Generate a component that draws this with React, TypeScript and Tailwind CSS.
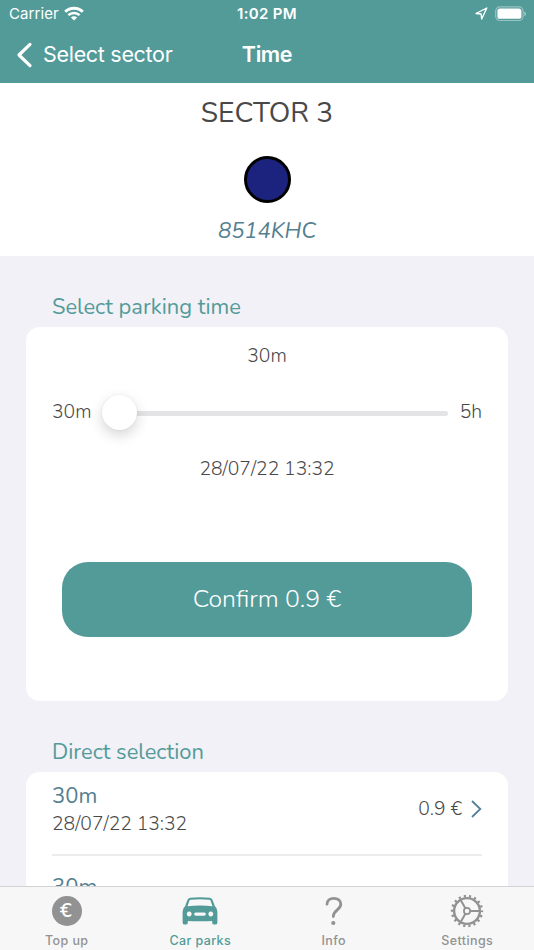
import React from "react";

const body = "font-['Nunito','Lato','Noto_Sans',sans-serif]";

function Wifi() {
  return (
    <svg width="20" height="15" viewBox="0 0 20 15" fill="none" stroke="white" strokeWidth="2.9">
      <path d="M1.2 5.8 A12.5 12.5 0 0 1 18.8 5.8" />
      <path d="M4.4 9.2 A8 8 0 0 1 15.6 9.2" strokeWidth="2.5" />
      <path d="M10 14.6 L6.9 11.5 A4.4 4.4 0 0 1 13.1 11.5 Z" fill="white" stroke="none" />
    </svg>
  );
}

function Battery() {
  return (
    <svg width="32" height="16" viewBox="0 0 32 16">
      <rect x="0.7" y="0.9" width="27.4" height="13.6" rx="4.2" fill="none" stroke="white" strokeOpacity="0.4" strokeWidth="1.2" />
      <rect x="2.4" y="2.6" width="24" height="10.2" rx="2.6" fill="white" />
      <path d="M29.4 5.4 Q31 6 31 7.7 Q31 9.4 29.4 10 Z" fill="white" fillOpacity="0.5" />
    </svg>
  );
}

function Car() {
  return (
    <svg width="36" height="28" viewBox="0 0 36 28">
      <path fillRule="evenodd" fill="#529b99" d="M8.2 0.8 Q18 -0.4 27.8 0.8 Q29.8 1.1 30.6 3 L32.9 9.3 Q35.4 11 35.4 14.5 V25.4 Q35.4 27.6 33.2 27.6 H32.2 Q30.2 27.6 30.2 25.4 V23.9 Q18 24.8 5.8 23.9 V25.4 Q5.8 27.6 3.8 27.6 H2.8 Q0.6 27.6 0.6 25.4 V14.5 Q0.6 11 3.1 9.3 L5.4 3 Q6.2 1.1 8.2 0.8 Z M8.8 2.7 Q7.7 2.8 7.3 3.9 L5.5 9.2 Q18 8 30.5 9.2 L28.7 3.9 Q28.3 2.8 27.2 2.7 Q18 1.6 8.8 2.7 Z M7.2 14.6 a2.4 2.4 0 1 0 0.01 0 Z M28.8 14.6 a2.4 2.4 0 1 0 0.01 0 Z M13.8 15.4 a1.7 1.7 0 0 0 0 3.4 h8.4 a1.7 1.7 0 0 0 0 -3.4 Z" />
    </svg>
  );
}

function Gear() {
  return (
    <svg width="34" height="34" viewBox="0 0 34 34" fill="none" stroke="#929292">
      <circle cx="17" cy="17" r="12.9" strokeWidth="2.4" />
      <circle cx="17" cy="17" r="15" strokeWidth="2.4" strokeDasharray="2.2 3.036" strokeDashoffset="1.1" />
      <circle cx="17" cy="17" r="3.1" strokeWidth="1.8" />
      <path d="M20 17 H30 M15.5 14.4 L10.5 5.8 M15.5 19.6 L10.5 28.2" strokeWidth="2" />
    </svg>
  );
}

function Tab({ icon, label, active = false }: { icon: React.ReactNode; label: string; active?: boolean }) {
  return (
    <div className={`flex flex-1 flex-col items-center ${active ? "text-[#529b99]" : "text-[#929292]"}`}>
      <div className="flex h-[46px] items-center justify-center pt-[2px]">{icon}</div>
      <span className="font-[Inter,sans-serif] text-[12.5px] leading-4 font-medium tracking-[0.4px]">{label}</span>
    </div>
  );
}

export default function App() {
  return (
    <div className={`flex h-[950px] w-[534px] flex-col overflow-hidden bg-[#f2f1f7] text-[#484848] ${body}`}>
      <header className="h-[83px] shrink-0 bg-[#529b99] font-[Inter,sans-serif] text-white">
        <div className="grid h-7 grid-cols-3 items-center pr-[7px] pl-[9px] text-[15px]">
          <div className="flex items-center gap-[5px]">
            <span className="tracking-[0.1px]">Carrier</span>
            <div className="pb-[2px]"><Wifi /></div>
          </div>
          <span className="pr-[2px] text-center text-[15px] font-semibold tracking-[0.3px]">1:02 PM</span>
          <div className="flex items-center justify-end gap-[7px] pb-px">
            <svg width="13" height="13" viewBox="0 0 13 13" fill="none" stroke="white" strokeWidth="1.4" strokeLinejoin="round">
              <path d="M11.8 1 L1 6.5 L6.1 7 L6.7 12 Z" />
            </svg>
            <Battery />
          </div>
        </div>
        <div className="grid h-[54px] grid-cols-3 items-center px-4">
          <div className="flex items-center gap-[10px] whitespace-nowrap">
            <svg width="17" height="26" viewBox="0 0 17 26" fill="none" stroke="white" strokeWidth="3.2" strokeLinecap="round" strokeLinejoin="round">
              <path d="M14 2.4 L3 13 L14 23.6" />
            </svg>
            <span className="pb-[2px] text-[21.5px] tracking-[-0.3px]">Select sector</span>
          </div>
          <span className="pb-[2px] text-center text-[21.5px] font-semibold tracking-[-0.4px]">Time</span>
        </div>
      </header>

      <section className="flex h-[173px] shrink-0 flex-col items-center bg-white">
        <h1 className="mt-[13px] text-[28.1px] leading-[34px]">SECTOR 3</h1>
        <div className="mt-[26px] size-[47px] rounded-full border-[3px] border-black bg-[#1b237f]" />
        <div className="mt-[14px] text-[22px] leading-7 text-[#54808f] italic">8514KHC</div>
      </section>

      <main className="flex min-h-0 grow flex-col overflow-hidden px-[26px]">
        <h2 className="mt-[37px] shrink-0 pl-[26px] text-[21.9px] leading-7 text-[#529b99]">Select parking time</h2>
        <div className="mt-[6px] flex h-[374px] shrink-0 flex-col rounded-[14px] bg-white px-[26px] font-light">
          <div className="mt-[17px] text-center text-[19.3px] leading-6">30m</div>
          <div className="mt-[20px] flex h-12 items-center text-[19.3px]">
            <span className="w-[50px]">30m</span>
            <div className="flex h-9 grow items-center">
              <div className="relative size-[35px] shrink-0 rounded-full bg-white shadow-[0_5px_14px_rgba(0,0,0,0.17),0_0_2px_rgba(0,0,0,0.08)]" />
              <div className="mt-[3px] -ml-px h-[5px] grow rounded-r-full bg-[#e4e4e6]" />
            </div>
            <span className="w-[34px] text-right">5h</span>
          </div>
          <div className="mt-[21px] text-center text-[19.3px] leading-6">28/07/22 13:32</div>
          <button className="mx-[10px] mt-[81px] h-[75px] rounded-[26px] bg-[#529b99] pt-px text-[24.8px] text-white">Confirm 0.9 €</button>
        </div>
        <h2 className="mt-[37px] shrink-0 pl-[26px] text-[21.9px] leading-7 text-[#529b99]">Direct selection</h2>
        <div className="mt-[6px] flex min-h-0 grow flex-col rounded-t-[14px] bg-white px-[26px]">
          <div className="flex h-[84px] shrink-0 items-center justify-between border-b-2 border-[#ececee]">
            <div className="pb-[6px]">
              <div className="text-[22px] leading-7 text-[#54808f]">30m</div>
              <div className="text-[19.3px] leading-7 font-light">28/07/22 13:32</div>
            </div>
            <div className="flex items-center gap-[9px] pb-[8px] text-[19.3px] font-light">
              <span>0.9 €</span>
              <svg width="11" height="18" viewBox="0 0 11 18" fill="none" stroke="#54809a" strokeWidth="1.8">
                <path d="M1 1 L9.3 9 L1 17" />
              </svg>
            </div>
          </div>
          <div className="mt-[17px] text-[22px] leading-7 text-[#54808f]">30m</div>
        </div>
      </main>

      <nav className="flex h-16 shrink-0 border-t border-[#d3d3d5] bg-[#f7f7f7]">
        <Tab
          label="Top up"
          icon={<div className="flex size-[30px] items-center justify-center rounded-full bg-[#929292] pr-[2px] text-[20px] leading-none font-semibold text-white">€</div>}
        />
        <Tab label="Car parks" active icon={<Car />} />
        <Tab
          label="Info"
          icon={
            <svg width="20" height="30" viewBox="0 0 20 30" fill="none" stroke="#929292" strokeWidth="2.8" strokeLinecap="round">
              <path d="M3 8.2 C3 4.2 6 2.3 9.7 2.3 C13.8 2.3 16.8 4.6 16.8 8.3 C16.8 14 9.3 13.8 9.3 20.6" />
              <circle cx="9.3" cy="27" r="2.1" fill="#929292" stroke="none" />
            </svg>
          }
        />
        <Tab label="Settings" icon={<Gear />} />
      </nav>
    </div>
  );
}
